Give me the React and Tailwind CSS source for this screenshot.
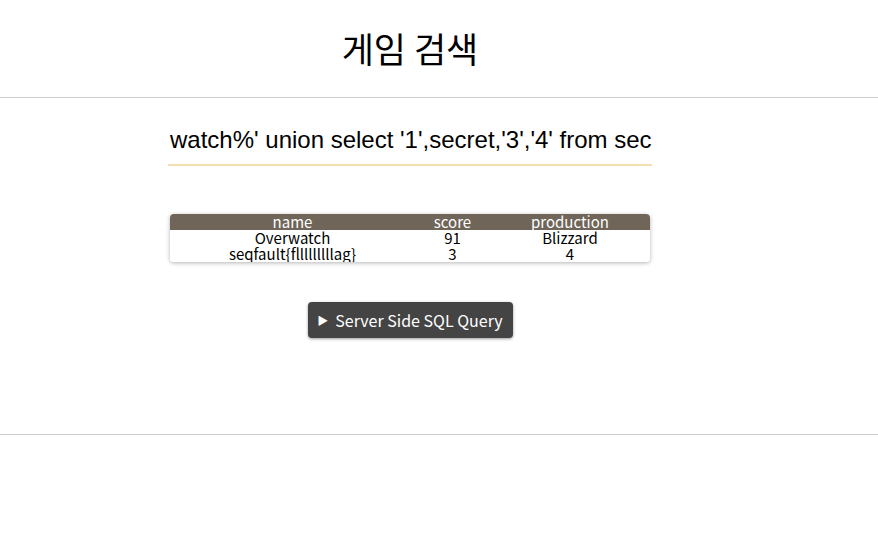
import React from 'react';

const rows = [
    { name: 'Overwatch', score: '91', production: 'Blizzard' },
    { name: 'seqfault{flllllllllag}', score: '3', production: '4' },
];

const App = () => {
    return (
        <div className="bg-white min-h-[540px] w-[878px] text-black" style={{ fontFamily: '"Noto Sans CJK KR", "Noto Sans", sans-serif' }}>
            {/* Title */}
            <div className="h-[97px] w-[820px] flex justify-center pt-[21px]">
                <h1 className="text-[35px] leading-[54px] font-normal">게임 검색</h1>
            </div>
            <div className="border-t border-[#cccccc]"></div>

            <div className="h-[336px] w-[820px] flex flex-col items-center">
                {/* Search input */}
                <div className="mt-[23px] w-[484px] border-b-2 border-[#f3dfb0] overflow-hidden whitespace-nowrap pl-[2px] h-[45px]">
                    <span className="text-[24px] leading-[38px]" style={{ fontFamily: '"Liberation Sans", Arial, sans-serif' }}>
                        watch%' union select '1',secret,'3','4' from secret -- 
                    </span>
                </div>

                {/* Result table */}
                <div className="mt-[48px] w-[480px] rounded-[4px] overflow-hidden shadow-[0_1px_4px_rgba(0,0,0,0.3)] text-[15px] leading-[16px]">
                    <div className="grid grid-cols-[245px_75px_160px] bg-[#706559] text-white text-center">
                        <div>name</div>
                        <div>score</div>
                        <div>production</div>
                    </div>
                    {rows.map((r, i) => (
                        <div key={i} className="grid grid-cols-[245px_75px_160px] text-center bg-white">
                            <div>{r.name}</div>
                            <div>{r.score}</div>
                            <div>{r.production}</div>
                        </div>
                    ))}
                </div>

                {/* Query toggle */}
                <button className="mt-[40px] w-[205px] h-[36px] bg-[#444444] text-white rounded-[4px] shadow-[0_1px_3px_rgba(0,0,0,0.4)] flex items-center justify-center gap-[7px] text-[16px]">
                    <span className="text-[11px]">▶</span>
                    <span>Server Side SQL Query</span>
                </button>
            </div>
            <div className="border-t border-[#cccccc]"></div>
        </div>
    );
};

export default App;
